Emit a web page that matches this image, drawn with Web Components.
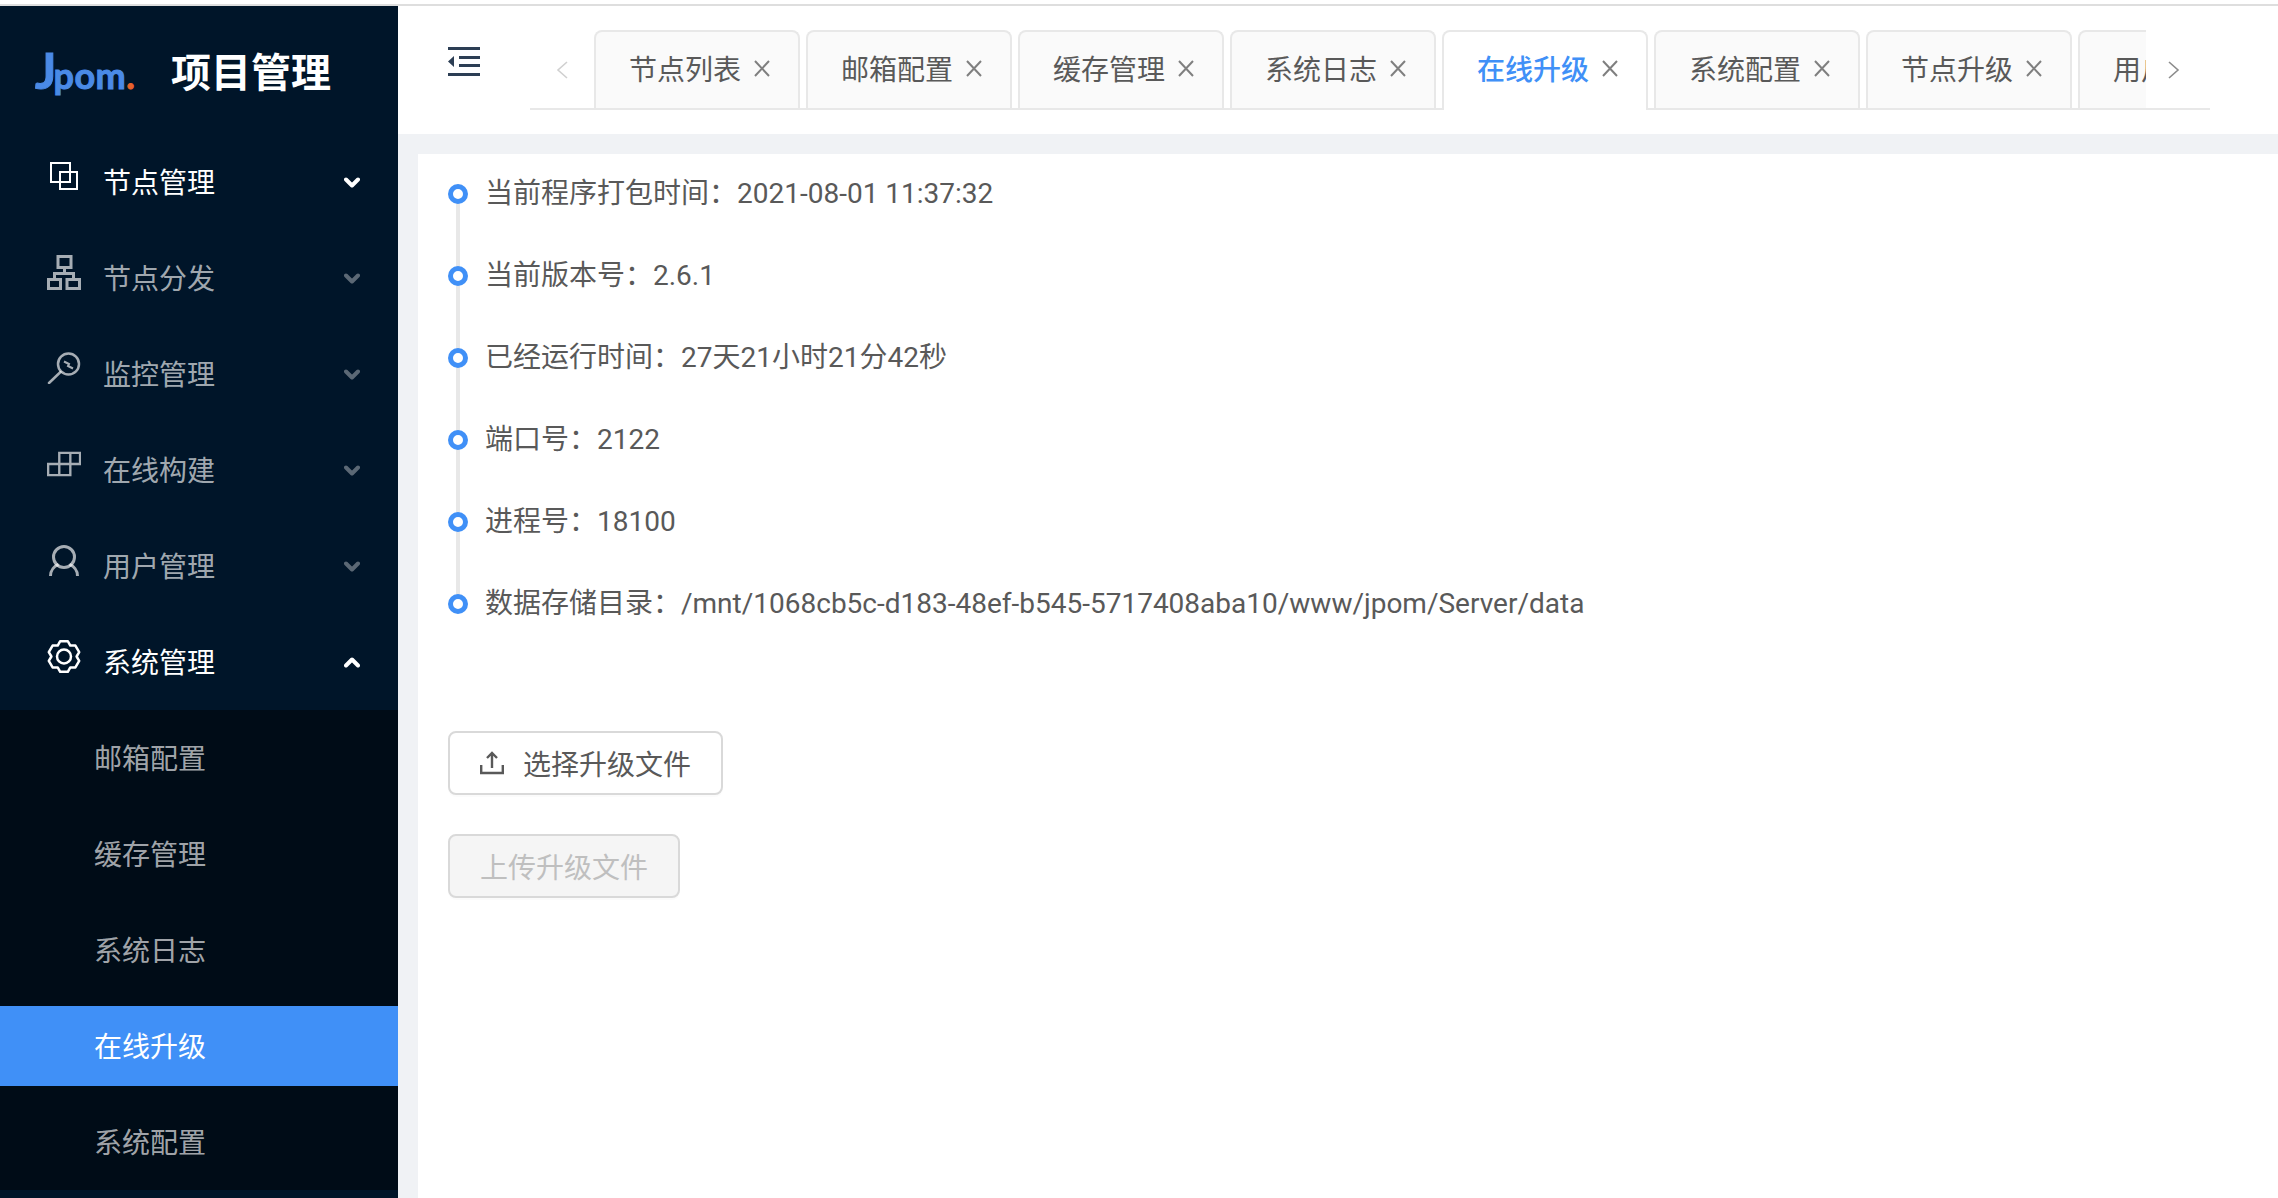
<!DOCTYPE html>
<html lang="zh-CN">
<head>
<meta charset="utf-8">
<title>项目管理</title>
<style>
  html, body { margin: 0; height: 100%; overflow: hidden; background: #fff; }
  body { font-family: Roboto, "Noto Sans CJK SC", sans-serif; font-size: 28px; }
</style>
</head>
<body>
<app-shell>
  <side-bar slot="side">
    <menu-item icon="block" on>节点管理</menu-item>
    <menu-item icon="tree">节点分发</menu-item>
    <menu-item icon="monitor">监控管理</menu-item>
    <menu-item icon="build">在线构建</menu-item>
    <menu-item icon="user">用户管理</menu-item>
    <menu-item icon="gear" on open>系统管理</menu-item>
    <sub-menu>
      <menu-item sub>邮箱配置</menu-item>
      <menu-item sub>缓存管理</menu-item>
      <menu-item sub>系统日志</menu-item>
      <menu-item sub active>在线升级</menu-item>
      <menu-item sub>系统配置</menu-item>
    </sub-menu>
  </side-bar>
  <top-bar slot="top">
    <tab-item>节点列表</tab-item>
    <tab-item>邮箱配置</tab-item>
    <tab-item>缓存管理</tab-item>
    <tab-item>系统日志</tab-item>
    <tab-item active>在线升级</tab-item>
    <tab-item>系统配置</tab-item>
    <tab-item>节点升级</tab-item>
    <tab-item>用户列表</tab-item>
  </top-bar>
  <time-line>
    <time-item>当前程序打包时间：2021-08-01 11:37:32</time-item>
    <time-item>当前版本号：2.6.1</time-item>
    <time-item>已经运行时间：27天21小时21分42秒</time-item>
    <time-item>端口号：2122</time-item>
    <time-item>进程号：18100</time-item>
    <time-item last>数据存储目录：/mnt/1068cb5c-d183-48ef-b545-5717408aba10/www/jpom/Server/data</time-item>
  </time-line>
  <action-button icon>选择升级文件</action-button>
  <action-button disabled>上传升级文件</action-button>
</app-shell>

<script>
  (function() {
    // small helper so every element is just styles + markup
    const define = (name, html, setup) => {
      customElements.define(name, class extends HTMLElement {
        connectedCallback() {
          if (this.shadowRoot) return;
          this.attachShadow({ mode: 'open' }).innerHTML = html;
          if (setup) setup(this);
        }
      });
    };

    const gearPath = () => {
      const pts = [];
      for (let k = 0; k < 6; k++) {
        const a = Math.PI / 2 + k * Math.PI / 3;
        [[-0.52, 12.6], [-0.24, 15.8], [0.24, 15.8], [0.52, 12.6]].forEach(([d, r]) => {
          pts.push((17 + r * Math.cos(a + d)).toFixed(1) + ',' + (17.5 + r * Math.sin(a + d)).toFixed(1));
        });
      }
      return pts.join(' ');
    };

    const icons = {
      block: '<svg width="34" height="34" viewBox="-3 -3 34 34" fill="none" stroke="currentColor" stroke-width="2"><path d="M1 1h19v19H1zM10 20V10h17v17H10v-7"/></svg>',
      tree: '<svg width="34" height="35" viewBox="0 0 34 35" fill="none" stroke="currentColor" stroke-width="3"><path d="M11 1.500h13v11H11zM1.500 24.500h12v9h-12zM20 24.500h12.500v9H20zM17.500 12.500v6M7.500 24.500v-6h19v6"/></svg>',
      monitor: '<svg width="34" height="32" viewBox="-1 0 34 32" fill="none" stroke="currentColor" stroke-width="2.500"><circle cx="20.500" cy="12" r="10.500"/><path d="M12.500 20 1 31" stroke-linecap="round"/><path d="M16 9.500l5 2.500-1 2 5 2.500" stroke-width="2"/></svg>',
      build: '<svg width="36" height="26" viewBox="0 0 36 26" fill="none" stroke="currentColor" stroke-width="2.500"><path d="M1.200 13h23.500v11.800H1.200zM13 24.800V1.200h22v11.800H24.700V1.200"/></svg>',
      user: '<svg width="34" height="31" viewBox="-2 0 34 31" fill="none" stroke="currentColor" stroke-width="3"><circle cx="15" cy="12" r="10.500"/><path d="M1.500 31c0-6 4-10 8-11.500M28.500 31c0-6-4-10-8-11.500"/></svg>',
      gear: '<svg width="34" height="35" viewBox="0 0 34 35" fill="none" stroke="currentColor" stroke-width="2.500" stroke-linejoin="round"><polygon points="' + gearPath() + '"/><circle cx="17" cy="17.500" r="7"/></svg>'
    };

    define('app-shell', `
      <style>
        :host { display: flex; flex-direction: column; height: 100vh; }
        .line { height: 2px; margin-top: 4px; background: #dedede; flex: none; }
        .row { display: flex; flex: 1; min-height: 0; }
        .main { flex: 1; min-width: 0; display: flex; flex-direction: column; background: #f0f2f5; }
        .content { flex: 1; margin: 20px 0 0 20px; background: #fff; padding: 18px 30px; }
      </style>
      <div class="line"></div>
      <div class="row">
        <slot name="side"></slot>
        <div class="main">
          <slot name="top"></slot>
          <div class="content"><slot></slot></div>
        </div>
      </div>`);

    define('side-bar', `
      <style>
        :host { display: block; width: 398px; flex: none; background: #001529; overflow: hidden; }
        .logo { display: flex; align-items: center; height: 128px; padding-left: 35px; box-sizing: border-box; }
        .mark { display: flex; align-items: baseline; width: 136px; height: 64px; margin-top: 4px; color: #4a8ae6; font: 700 36px/60px Lato, sans-serif; -webkit-text-stroke: 1px #4a8ae6; letter-spacing: .5px; white-space: nowrap; }
        .mark b { font-size: 50px; font-weight: 700; letter-spacing: -3px; }
        .mark i { font-style: normal; color: #e8622c; -webkit-text-stroke: 1px #e8622c; }
        h1 { margin: 0; color: #fff; font: 600 40px/56px "Noto Sans CJK SC", sans-serif; }
        .list { display: flex; flex-direction: column; }
      </style>
      <div class="logo"><span class="mark"><b>J</b>pom<i>.</i></span><h1>项目管理</h1></div>
      <div class="list"><slot></slot></div>`);

    define('menu-item', `
      <style>
        :host { display: flex; align-items: center; height: 80px; margin: 8px 0; color: rgba(255,255,255,.65); font: 28px/40px "Noto Sans CJK SC", sans-serif; }
        :host([on]) { color: #fff; }
        :host([sub]) { padding-left: 94px; }
        :host([active]) { background: #4090f7; color: #fff; }
        .ico { width: 34px; margin: 0 22px 12px 47px; display: flex; justify-content: center; }
        .txt { flex: 1; padding-bottom: 3px; }
        .arrow { width: 16px; margin-right: 38px; display: flex; opacity: .55; }
        :host([on]) .arrow { opacity: 1; }
        :host([sub]) .ico, :host([sub]) .arrow { display: none; }
        :host([open]) .arrow { transform: rotate(180deg); }
      </style>
      <span class="ico"></span>
      <span class="txt"><slot></slot></span>
      <span class="arrow"><svg width="16" height="11" viewBox="0 0 16 11" fill="none" stroke="currentColor" stroke-width="4" stroke-linecap="round" stroke-linejoin="round"><path d="M2 2.500l6 6 6-6"/></svg></span>`,
      el => {
        const name = el.getAttribute('icon');
        if (name) el.shadowRoot.querySelector('.ico').innerHTML = icons[name];
      });

    define('sub-menu', `
      <style>
        :host { display: flex; flex-direction: column; background: #000c17; }
      </style>
      <slot></slot>`);

    define('top-bar', `
      <style>
        :host { display: flex; align-items: flex-start; height: 128px; flex: none; box-sizing: border-box; padding: 24px 0 0 50px; background: #fff; }
        .toggle { width: 32px; height: 29px; margin: 17px 50px 0 0; flex: none; color: #2c3e54; }
        .bar { display: flex; width: 1680px; height: 78px; border-bottom: 2px solid #e8e8e8; }
        .nav { flex: none; width: 64px; height: 78px; display: flex; align-items: center; justify-content: center; color: #8c8c8c; }
        .nav.off { color: #d0d0d0; }
        .nav svg { margin-top: 2px; }
        .nav.next { justify-content: flex-start; padding-left: 22px; box-sizing: border-box; }
        .wrap { flex: 1; min-width: 0; height: 80px; margin-bottom: -2px; overflow: hidden; display: flex; gap: 6px; }
      </style>
      <svg class="toggle" viewBox="0 0 32 29" fill="currentColor"><path d="M0 0h32v3H0zM11 9h21v3H11zM11 17h21v3H11zM0 26h32v3H0zM6 9v11l-6-5.500z"/></svg>
      <div class="bar">
        <span class="nav off"><svg width="12" height="18" viewBox="0 0 12 18" fill="none" stroke="currentColor" stroke-width="1.600"><path d="M11 1 2 9l9 8"/></svg></span>
        <div class="wrap"><slot></slot></div>
        <span class="nav next"><svg width="12" height="18" viewBox="0 0 12 18" fill="none" stroke="currentColor" stroke-width="1.600"><path d="M1 1l9 8-9 8"/></svg></span>
      </div>`);

    define('tab-item', `
      <style>
        :host { display: flex; align-items: center; flex: none; box-sizing: border-box; width: 206px; height: 78px; padding: 0 0 4px 33px; background: #fafafa; border: 2px solid #e8e8e8; border-bottom: 0; border-radius: 8px 8px 0 0; color: #595959; font: 28px/40px "Noto Sans CJK SC", sans-serif; white-space: nowrap; }
        :host([active]) { height: 80px; background: #fff; color: #4090f7; font-weight: 500; padding-bottom: 6px; }
        svg { margin-left: 12px; color: #7f7f7f; flex: none; }
      </style>
      <slot></slot>
      <svg width="18" height="17" viewBox="0 0 18 17" fill="none" stroke="currentColor" stroke-width="2"><path d="M2 1l14 15M16 1 2 16"/></svg>`);

    define('time-line', `
      <style>
        :host { display: block; height: 559px; }
      </style>
      <slot></slot>`);

    define('time-item', `
      <style>
        :host { display: block; position: relative; height: 82px; padding-left: 37px; color: #595959; font: 28px/44px Roboto, "Noto Sans CJK SC", sans-serif; white-space: nowrap; }
        .dot { position: absolute; left: 0; top: 12px; width: 10px; height: 10px; border: 5px solid #4090f7; border-radius: 50%; background: #fff; z-index: 1; }
        .tail { position: absolute; left: 8px; top: 20px; width: 4px; height: 82px; background: #e8e8e8; }
        :host([last]) .tail { display: none; }
      </style>
      <span class="tail"></span><span class="dot"></span><slot></slot>`);

    define('action-button', `
      <style>
        :host { display: flex; align-items: center; box-sizing: border-box; width: fit-content; height: 64px; margin-bottom: 39px; padding: 0 30px; background: #fff; border: 2px solid #d9d9d9; border-radius: 8px; box-shadow: 0 2px 0 rgba(0,0,0,.015); color: #595959; font: 28px/40px "Noto Sans CJK SC", sans-serif; }
        :host([disabled]) { background: #f5f5f5; color: #bfbfbf; }
        svg { display: none; margin-right: 19px; }
        :host([icon]) svg { display: block; }
      </style>
      <svg width="24" height="24" viewBox="0 0 24 24" fill="none" stroke="currentColor" stroke-width="2.400"><path d="M1.200 14v8h21.600v-8M12 17V2M7 7l5-5 5 5"/></svg>
      <slot></slot>`);
  })();
</script>
</body>
</html>
